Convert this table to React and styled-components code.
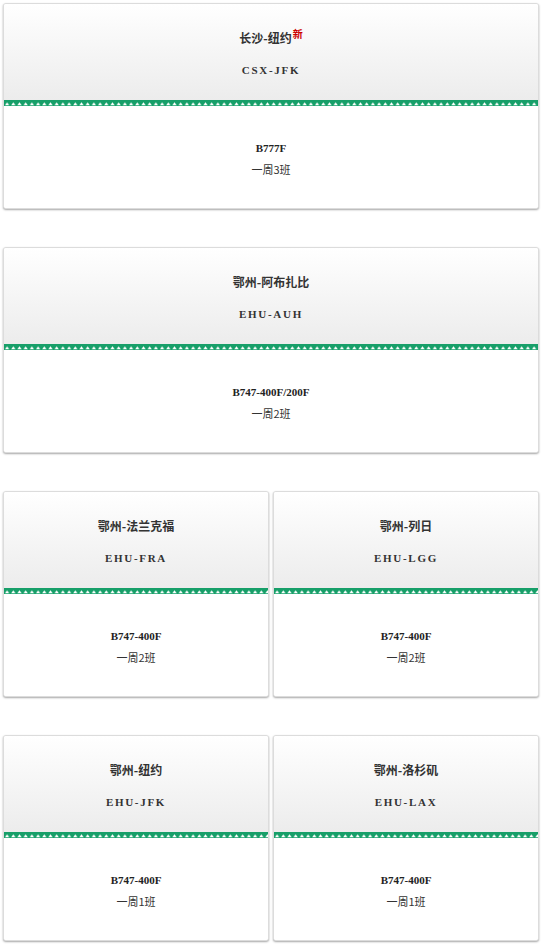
import React from 'react';
import styled, { createGlobalStyle } from 'styled-components';

const GlobalStyle = createGlobalStyle`
  html, body {
    margin: 0;
    padding: 0;
    background: #fff;
  }
  body {
    font-family: "Liberation Serif", "Noto Sans CJK SC", serif;
    color: #333;
  }
`;

// 航线数据，每行一张或两张卡片
const rows = [
  [{ city: '长沙-纽约', isNew: true, code: 'CSX-JFK', plane: 'B777F', freq: '一周3班' }],
  [{ city: '鄂州-阿布扎比', code: 'EHU-AUH', plane: 'B747-400F/200F', freq: '一周2班' }],
  [
    { city: '鄂州-法兰克福', code: 'EHU-FRA', plane: 'B747-400F', freq: '一周2班' },
    { city: '鄂州-列日', code: 'EHU-LGG', plane: 'B747-400F', freq: '一周2班' },
  ],
  [
    { city: '鄂州-纽约', code: 'EHU-JFK', plane: 'B747-400F', freq: '一周1班' },
    { city: '鄂州-洛杉矶', code: 'EHU-LAX', plane: 'B747-400F', freq: '一周1班' },
  ],
];

const Zigzag = () => (
  <svg width="100%" height="6" style={{ display: 'block' }}>
    <defs>
      <pattern id="zz" width="6.2" height="6" patternUnits="userSpaceOnUse">
        <rect width="6.2" height="6" fill="#179f69" />
        <polygon points="1,5.2 3.1,2.2 5.2,5.2" fill="#fff" />
      </pattern>
    </defs>
    <rect width="100%" height="6" fill="url(#zz)" />
  </svg>
);

const App = () => (
  <>
    <GlobalStyle />
    <Page>
      {rows.map((row, i) => (
        <Row key={i} cols={row.length}>
          {row.map((r) => (
            <Card key={r.code}>
              <Head>
                <City>
                  {r.city}
                  {r.isNew && <New>新</New>}
                </City>
                <Code>{r.code}</Code>
              </Head>
              <Zigzag />
              <Body>
                <Plane>{r.plane}</Plane>
                <Freq>{r.freq}</Freq>
              </Body>
            </Card>
          ))}
        </Row>
      ))}
    </Page>
  </>
);

export default App;

const Page = styled.div`
  padding: 3px 3px 7px;
  display: flex;
  flex-direction: column;
  gap: 38px;
`;

const Row = styled.div`
  display: grid;
  grid-template-columns: repeat(${(p) => p.cols}, 1fr);
  column-gap: 4px;
`;

const Card = styled.div`
  border: 1px solid #dcdcdc;
  border-radius: 3px;
  overflow: hidden;
  box-shadow: 0 1px 2px rgba(0, 0, 0, 0.35);
  background: #fff;
`;

const Head = styled.div`
  height: 96px;
  box-sizing: border-box;
  padding-top: 26px;
  text-align: center;
  background: linear-gradient(to bottom, #ffffff, #ececec);
`;

const City = styled.div`
  font-family: "Noto Sans CJK SC", sans-serif;
  font-size: 12px;
  font-weight: bold;
  line-height: 16px;
  color: #333;
`;

const New = styled.sup`
  color: #c00;
  font-size: 10px;
  line-height: 0;
  margin-left: 1px;
  vertical-align: 5px;
`;

const Code = styled.div`
  margin-top: 16px;
  font-size: 11px;
  font-weight: bold;
  line-height: 16px;
  letter-spacing: 1.7px;
  color: #333;
`;

const Body = styled.div`
  height: 102px;
  box-sizing: border-box;
  padding-top: 34px;
  text-align: center;
  background: #fff;
`;

const Plane = styled.div`
  font-size: 11px;
  font-weight: bold;
  line-height: 16px;
  color: #222;
`;

const Freq = styled.div`
  margin-top: 5px;
  font-family: "Noto Sans CJK SC", sans-serif;
  font-size: 11px;
  line-height: 16px;
  color: #333;
`;
